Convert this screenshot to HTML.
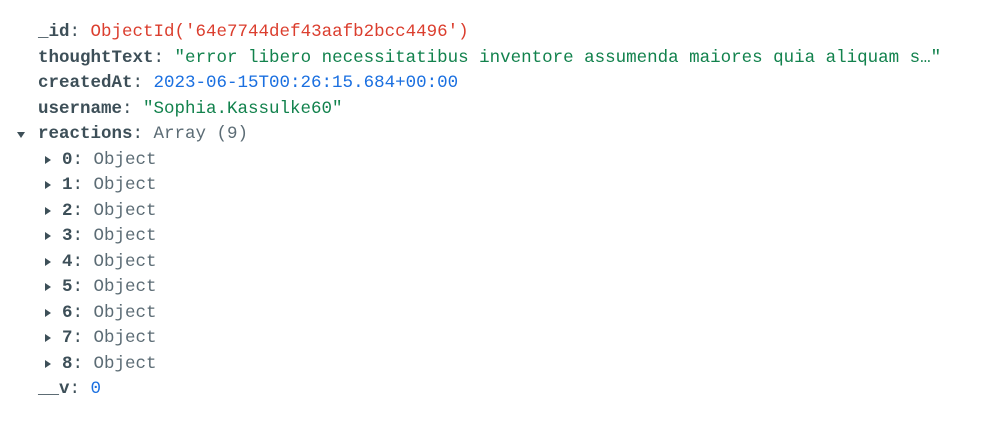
<html><head><style>
body{margin:0;background:#fff;width:991px;height:421px;overflow:hidden}
.w{position:absolute;left:38px;top:20px;font-family:"Liberation Mono",monospace;font-size:17.5px;line-height:25.5px;color:#3d4f58}
.r{position:relative;height:25.5px;white-space:pre}
b{font-weight:bold;color:#3d4f58}
.red{color:#db3e2e}.g{color:#12824d}.bl{color:#1a6fe0}.gr{color:#5c6c75}
.ad,.ar{position:absolute;width:0;height:0}
.ad{left:-21px;top:10px;border-left:4.5px solid transparent;border-right:4.5px solid transparent;border-top:6px solid #3d4f58}
.ar{left:7px;top:8px;border-top:4.5px solid transparent;border-bottom:4.5px solid transparent;border-left:6px solid #3d4f58}
.n{padding-left:24px}
</style></head><body><div class="w"><div class="r"><b>_id</b>: <span class="red">ObjectId('64e7744def43aafb2bcc4496')</span></div><div class="r"><b>thoughtText</b>: <span class="g">"error libero necessitatibus inventore assumenda maiores quia aliquam s…"</span></div><div class="r"><b>createdAt</b>: <span class="bl">2023-06-15T00:26:15.684+00:00</span></div><div class="r"><b>username</b>: <span class="g">"Sophia.Kassulke60"</span></div><div class="r"><span class="ad"></span><b>reactions</b>: <span class="gr">Array (9)</span></div><div class="r n"><span class="ar"></span><b>0</b>: <span class="gr">Object</span></div><div class="r n"><span class="ar"></span><b>1</b>: <span class="gr">Object</span></div><div class="r n"><span class="ar"></span><b>2</b>: <span class="gr">Object</span></div><div class="r n"><span class="ar"></span><b>3</b>: <span class="gr">Object</span></div><div class="r n"><span class="ar"></span><b>4</b>: <span class="gr">Object</span></div><div class="r n"><span class="ar"></span><b>5</b>: <span class="gr">Object</span></div><div class="r n"><span class="ar"></span><b>6</b>: <span class="gr">Object</span></div><div class="r n"><span class="ar"></span><b>7</b>: <span class="gr">Object</span></div><div class="r n"><span class="ar"></span><b>8</b>: <span class="gr">Object</span></div><div class="r"><b>__v</b>: <span class="bl">0</span></div></div></body></html>
